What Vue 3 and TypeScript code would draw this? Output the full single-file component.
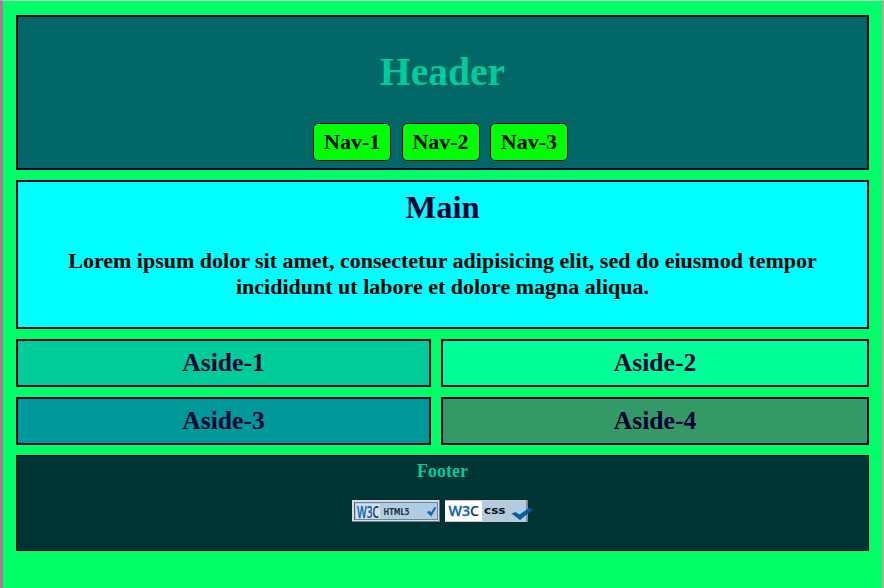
<script setup lang="ts">
interface Aside { label: string; tone: string }

const navItems: string[] = ['Nav-1', 'Nav-2', 'Nav-3']
const asides: Aside[] = [
  { label: 'Aside-1', tone: 'tone-1' },
  { label: 'Aside-2', tone: 'tone-2' },
  { label: 'Aside-3', tone: 'tone-3' },
  { label: 'Aside-4', tone: 'tone-4' },
]
</script>

<template>
  <div class="page">
    <header class="box header">
      <h1>Header</h1>
      <nav>
        <a v-for="item in navItems" :key="item">{{ item }}</a>
      </nav>
    </header>
    <main class="box main">
      <h2>Main</h2>
      <p>Lorem ipsum dolor sit amet, consectetur adipisicing elit, sed do eiusmod tempor incididunt ut labore et dolore magna aliqua.</p>
    </main>
    <section class="asides">
      <aside v-for="a in asides" :key="a.label" class="box" :class="a.tone">{{ a.label }}</aside>
    </section>
    <footer class="footer">
      <h4>Footer</h4>
      <div class="badges">
        <svg class="html-badge" width="88" height="22" viewBox="0 0 88 22">
          <rect width="88" height="22" fill="#d5dce4" />
          <path d="M0 21.5H87.5V0" fill="none" stroke="#737b88" />
          <rect x="2.5" y="2.5" width="83" height="17" fill="#b1cde5" stroke="#74819c" />
          <rect x="4" y="4" width="24" height="15" fill="#d2e2ef" />
          <path d="M2.5 2V20" stroke="#59616e" />
          <text x="5" y="17.500" class="w3" textLength="22" lengthAdjust="spacingAndGlyphs">W3<tspan class="c">C</tspan></text>
          <text x="31.500" y="14.800" class="tech" textLength="26" lengthAdjust="spacingAndGlyphs">HTML5</text>
          <path d="M75 12.500l2-2 2 2L82.500 7l1.800.8-5.100 8.700z" fill="#1765ab" />
        </svg>
        <svg class="css-badge" width="88" height="22" viewBox="0 0 88 22">
          <rect width="83" height="22" fill="#b1ccdf" />
          <rect width="37" height="22" fill="#fff" />
          <path d="M0 .5H82M0 21.500H82" stroke="#ccc" />
          <path d="M82 0V22" stroke="#858d94" stroke-width="2" />
          <text x="3.500" y="16" class="w3 wide" textLength="30.500" lengthAdjust="spacingAndGlyphs">W3<tspan class="c">C</tspan></text>
          <text x="39" y="14" class="css" textLength="21.500" lengthAdjust="spacingAndGlyphs">css</text>
          <path d="M66.500 13.500l4-1.500 4 2.500 9.500-6.500 4 1.500-13 10.500z" fill="#075ca9" />
        </svg>
      </div>
    </footer>
  </div>
</template>

<style>
body { margin: 0; overflow: hidden; }
</style>

<style scoped>
.page {
  box-sizing: border-box;
  width: 884px;
  height: 588px;
  padding: 14px 13px 0 13px;
  background: #00ff66;
  border: solid;
  border-width: 1px 2px 0 3px;
  border-color: #c8c8c8 #b0a8ac #000 #a97b93;
  font-family: "Liberation Serif", serif;
  font-weight: bold;
  color: #000;
  text-align: center;
}
h1, h2, h4, p { margin: 0; }
.box { box-sizing: border-box; border: 2px solid #000033; }
.header { height: 155px; background: #006666; padding-top: 32px; }
h1 { font-size: 39.6px; line-height: 46px; color: #00cc99; }
nav { display: flex; justify-content: center; gap: 10.4px; margin-top: 28px; padding-right: 4px; }
nav a {
  box-sizing: border-box;
  width: 78px;
  height: 38px;
  border: 1px solid #000033;
  border-radius: 5px;
  background: #00ff00;
  font-size: 22px;
  line-height: 36px;
}
.main { height: 149px; margin-top: 10px; padding: 7px 40px 0; background: #00ffff; }
h2 { font-size: 32.5px; line-height: 37px; color: #000033; }
p { margin-top: 22px; font-size: 22px; line-height: 26px; }
.asides { display: grid; grid-template-columns: 415px 428px; gap: 10px; margin: 10px 0; }
.asides .box { height: 48px; line-height: 44px; font-size: 25.6px; color: #000033; }
.tone-1 { background: #00cc99; }
.tone-2 { background: #00ff99; }
.tone-3 { background: #009999; }
.tone-4 { background: #339966; }
.footer { box-sizing: border-box; height: 96px; padding-top: 5px; border: 1px solid #000033; background: #003333; }
h4 { font-size: 18px; line-height: 21px; color: #00cc99; }
.badges { display: flex; justify-content: center; gap: 5px; margin-top: 18px; }
.w3 { font: 600 17px "Open Sans", sans-serif; fill: #1765a9; stroke: #1765a9; stroke-width: 0.3px; }
.wide { font-size: 14.5px; }
.c { fill: #263748; stroke: none; }
.tech { font: bold 9px "DejaVu Sans", sans-serif; fill: #26313e; }
.css { font: bold 11px "DejaVu Sans", sans-serif; fill: #111; }
</style>
